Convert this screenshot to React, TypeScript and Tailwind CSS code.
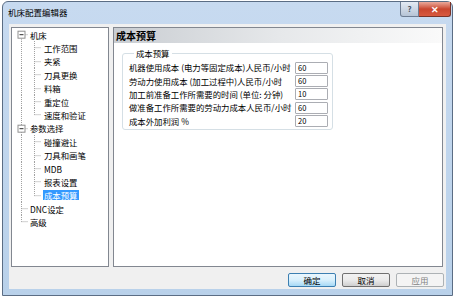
import React from 'react';

const font = "font-['Noto_Sans_CJK_SC',sans-serif]";

type TreeItem = { label: string; level: 0 | 1; first?: boolean; last?: boolean; expander?: boolean; selected?: boolean };

const items: TreeItem[] = [
  { label: '机床', level: 0, first: true, expander: true },
  { label: '工作范围', level: 1 },
  { label: '夹紧', level: 1 },
  { label: '刀具更换', level: 1 },
  { label: '料箱', level: 1 },
  { label: '重定位', level: 1 },
  { label: '速度和验证', level: 1, last: true },
  { label: '参数选择', level: 0, expander: true },
  { label: '碰撞避让', level: 1 },
  { label: '刀具和画笔', level: 1 },
  { label: 'MDB', level: 1 },
  { label: '报表设置', level: 1 },
  { label: '成本预算', level: 1, last: true, selected: true },
  { label: 'DNC设定', level: 0 },
  { label: '高级', level: 0, last: true },
];

const rows = [
  { label: '机器使用成本 (电力等固定成本)人民币/小时', value: '60' },
  { label: '劳动力使用成本 (加工过程中)人民币/小时', value: '60' },
  { label: '加工前准备工作所需要的时间 (单位: 分钟)', value: '10' },
  { label: '做准备工作所需要的劳动力成本人民币/小时', value: '60' },
  { label: '成本外加利润 %', value: '20' },
];

const line = { stroke: '#a0a0a0', strokeWidth: 1, strokeDasharray: '1 1' };

function Prefix({ item }: { item: TreeItem }) {
  const mid = 6.7;
  if (item.level === 0) {
    return (
      <svg width="16" height="13.4" viewBox="0 0 16 13.4" className="shrink-0">
        <line x1="9.5" x2="9.5" y1={item.first ? mid : 0} y2={item.last ? mid : 13.4} {...line} />
        <line x1="9.5" x2="16" y1={mid} y2={mid} {...line} />
        {item.expander && (
          <g>
            <rect x="6" y="3.2" width="7" height="7" fill="#fff" stroke="#919191" strokeWidth="1" />
            <line x1="7.5" x2="11.5" y1={mid} y2={mid} stroke="#2c2c2c" strokeWidth="1" />
          </g>
        )}
      </svg>
    );
  }
  return (
    <svg width="30" height="13.4" viewBox="0 0 30 13.4" className="shrink-0">
      <line x1="9.5" x2="9.5" y1="0" y2="13.4" {...line} />
      <line x1="22.5" x2="22.5" y1="0" y2={item.last ? mid : 13.4} {...line} />
      <line x1="22.5" x2="29" y1={mid} y2={mid} {...line} />
    </svg>
  );
}

function Btn({ children, kind }: { children: React.ReactNode; kind: 'default' | 'normal' | 'disabled' }) {
  const cls =
    kind === 'default'
      ? 'border-[#3c7fb1] bg-gradient-to-b from-[#eaf6fd] via-[#d9f0fc] to-[#a7d9f5] text-black'
      : kind === 'normal'
        ? 'border-[#707070] bg-gradient-to-b from-[#f2f2f2] via-[#ebebeb] to-[#cfcfcf] text-black'
        : 'border-[#adb2b5] bg-[#f4f4f4] text-[#838383]';
  return (
    <div className={`h-[14px] w-[48px] rounded-[2px] border flex items-center justify-center text-[8.5px] leading-none ${cls}`}>
      {children}
    </div>
  );
}

export default function App() {
  return (
    <div className={`w-[456px] h-[299px] bg-white pt-[1px] pl-[2px] ${font}`}>
      <div className="w-[451px] h-[295px] border border-[#5b6d84] rounded-t-[6px] bg-gradient-to-b from-[#c7daf0] to-[#b9d1ea] flex flex-col">
        {/* title bar */}
        <div className="h-[22px] flex items-start">
          <div className="pl-[5px] pt-[5px] text-[8.5px] leading-[11px] text-black">机床配置编辑器</div>
          <div className="ml-auto mr-[1px] flex">
            <div className="w-[19px] h-[15px] border border-t-0 border-[#6d7d93] rounded-bl-[3px] bg-gradient-to-b from-[#e4ebf4] to-[#b6c4d6] flex items-center justify-center text-[8px] font-bold text-[#4a5566] leading-none">
              ?
            </div>
            <div className="w-[32px] h-[15px] border border-t-0 border-l-0 border-[#7a3328] rounded-br-[3px] bg-gradient-to-b from-[#e9a99b] via-[#c9462f] to-[#d85a40] flex items-center justify-center text-[9px] font-bold text-white leading-none">
              ✕
            </div>
          </div>
        </div>

        {/* client area */}
        <div className="mx-[6px] h-[265px] bg-[#f0f0f0] flex flex-col pt-[3px] px-[2px]">
          <div className="h-[240px] flex gap-[4px]">
            {/* tree */}
            <div className="w-[98px] border border-[#828790] bg-white flex flex-col">
              {items.map((it) => (
                <div key={it.label} className="h-[13.4px] flex items-center">
                  <Prefix item={it} />
                  <span
                    className={`ml-[1px] px-[1px] text-[8.4px] leading-[10px] whitespace-nowrap ${
                      it.selected ? 'bg-[#3399ff] text-white' : 'text-black'
                    }`}
                  >
                    {it.label}
                  </span>
                </div>
              ))}
            </div>

            {/* page */}
            <div className="w-[330px] border border-[#828790] bg-white flex flex-col">
              <div className="h-[15px] bg-gradient-to-r from-[#c9cdd2] via-[#e6e8ea] to-[#fafafa] flex items-center pl-[2px]">
                <span className="text-[10px] font-bold leading-none text-black">成本预算</span>
              </div>
              <fieldset className="min-w-0 mt-[5px] ml-[8px] w-[211px] border border-[#d5dfe5] rounded-[3px] pl-[6px] pr-[4px] pt-[3px] pb-[2px]">
                <legend className="ml-[5px] px-[2px] text-[8.4px] leading-[10px] text-black">成本预算</legend>
                {rows.map((r) => (
                  <div key={r.label} className="h-[13.3px] flex items-center justify-between">
                    <span className="text-[8.4px] leading-none text-black whitespace-nowrap">{r.label}</span>
                    <div className="w-[33px] h-[12px] shrink-0 border border-[#abadb3] rounded-[1px] bg-white flex items-center pl-[2px] text-[7.5px] leading-none text-black">
                      {r.value}
                    </div>
                  </div>
                ))}
              </fieldset>
            </div>
          </div>

          {/* buttons */}
          <div className="mt-[6px] flex justify-end gap-[6px]">
            <Btn kind="default">确定</Btn>
            <Btn kind="normal">取消</Btn>
            <Btn kind="disabled">应用</Btn>
          </div>
        </div>
      </div>
    </div>
  );
}
